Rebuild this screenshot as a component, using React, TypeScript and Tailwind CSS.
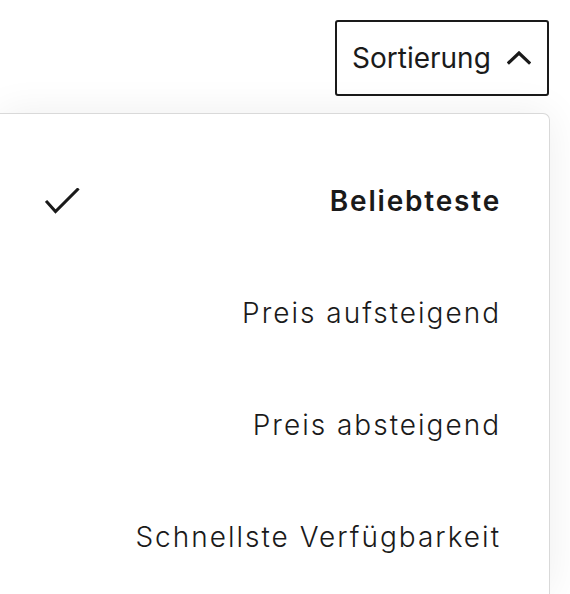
const options = [
  { label: 'Beliebteste', active: true },
  { label: 'Preis aufsteigend', active: false },
  { label: 'Preis absteigend', active: false },
  { label: 'Schnellste Verfügbarkeit', active: false },
]

function CheckIcon() {
  return (
    <svg width="36" height="28" viewBox="0 0 36 28" fill="none" className="shrink-0">
      <polyline
        points="2,14 10.5,23.5 32.5,1.5"
        stroke="#1a1a1a"
        strokeWidth="3"
        strokeLinecap="square"
      />
    </svg>
  )
}

function ChevronUp() {
  return (
    <svg width="24" height="14" viewBox="0 0 24 14" fill="none" className="shrink-0">
      <polyline
        points="2,11.5 12,2 22,11.5"
        stroke="#1a1a1a"
        strokeWidth="3.2"
        strokeLinecap="square"
      />
    </svg>
  )
}

export default function App() {
  return (
    <div
      className="w-[570px] h-[594px] overflow-hidden bg-white flex flex-col items-end text-[#1a1a1a]"
      style={{ fontFamily: 'Inter, "Noto Sans", sans-serif' }}
    >
      <button className="mt-[20px] mr-[21px] h-[76px] w-[214px] border-2 border-[#1a1a1a] rounded-[3px] bg-white flex items-center justify-between pl-[15px] pr-[16px] text-[28px] leading-none">
        <span>Sortierung</span>
        <ChevronUp />
      </button>

      <div className="mt-[17px] mr-[20px] w-[550px] flex-1 bg-white border-t border-r border-[#d9d9d9] rounded-tr-[7px] shadow-[0_0_40px_rgba(0,0,0,0.07)] pt-[32px] pr-[50px] pl-[45px]">
        {options.map((o) => (
          <div key={o.label} className="h-[112px] flex items-center justify-between">
            <span className="w-[36px]">{o.active && <CheckIcon />}</span>
            <span
              className={`text-[28px] leading-[1.2] mr-[-2px] ${
                o.active ? 'font-semibold tracking-[1.8px]' : 'font-light tracking-[2px]'
              }`}
            >
              {o.label}
            </span>
          </div>
        ))}
      </div>
    </div>
  )
}
